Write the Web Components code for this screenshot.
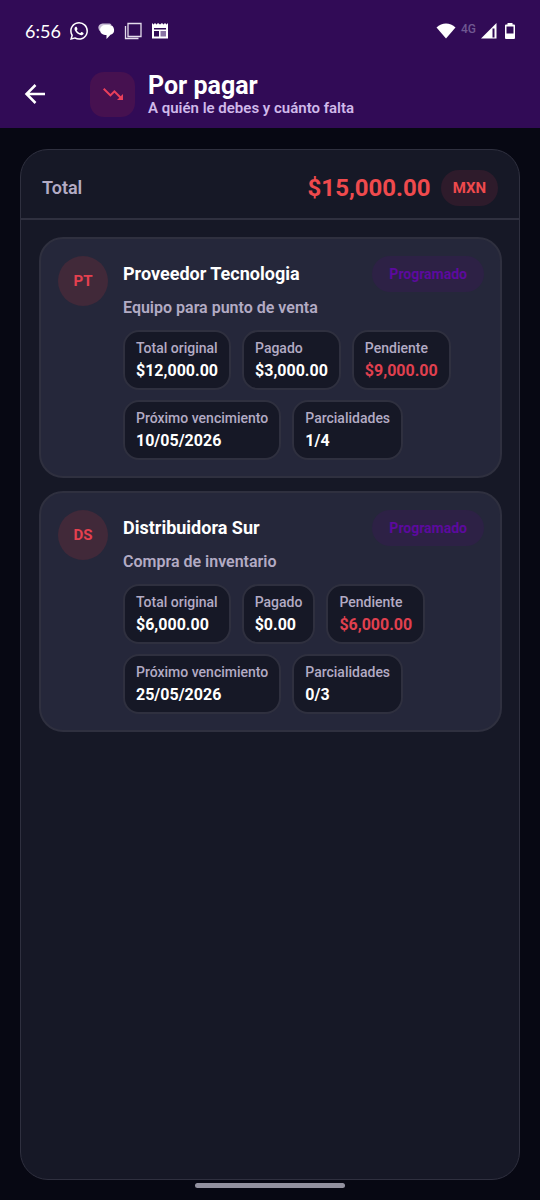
<!DOCTYPE html>
<html lang="es">
<head>
<meta charset="utf-8">
<meta name="viewport" content="width=device-width, initial-scale=1">
<title>Por pagar</title>
<style>
  :root {
    --bar: #310b56;
    --page: #070813;
    --panel: #161826;
    --card: #25273a;
    --line: #2f303f;
    --text: #ffffff;
    --muted: #b3abc4;
    --danger: #ef4a4d;
    --accent: #5c0a9e;
  }
  body {
    margin: 0;
    background: var(--page);
    color: var(--text);
    font-family: Roboto, "Liberation Sans", sans-serif;
  }
</style>
</head>
<body>
<payables-page></payables-page>

<script>
const define = (name, html, setup) => {
  const template = document.createElement('template');
  template.innerHTML = html;
  customElements.define(name, class extends HTMLElement {
    constructor() {
      super();
      this.attachShadow({ mode: 'open' }).append(template.content.cloneNode(true));
    }
    connectedCallback() {
      if (setup) setup(this, this.shadowRoot);
    }
  });
};

define('status-bar', `
  <style>
    :host { display: flex; align-items: center; justify-content: space-between; height: 62px; padding: 0 24px 0 25px; }
    div { display: flex; align-items: center; }
    .left { gap: 9px; }
    .time { font: 400 18px/24px Lato, Roboto, sans-serif; }
    .net { font: 500 12px/14px Roboto, sans-serif; color: #6f5891; align-self: flex-start; margin: 0 4px 0 5px; }
    svg { display: block; }
  </style>
  <div class="left">
    <span class="time">6:56</span>
    <svg width="18" height="18" viewBox="0 0 24 24" fill="#fff"><path d="M17.47 14.38c-.3-.15-1.76-.87-2.03-.97-.27-.1-.47-.15-.67.15-.2.3-.77.97-.94 1.16-.17.2-.35.22-.64.08-.3-.15-1.26-.46-2.39-1.48-.88-.79-1.48-1.76-1.65-2.06-.17-.3-.02-.46.13-.6.13-.14.3-.35.45-.53.15-.17.2-.3.3-.49.1-.2.05-.37-.03-.52-.07-.15-.67-1.61-.91-2.21-.24-.58-.49-.5-.67-.51h-.57c-.2 0-.52.07-.79.37-.27.3-1.04 1.02-1.04 2.48s1.07 2.88 1.22 3.07c.14.2 2.09 3.2 5.07 4.49.71.3 1.26.49 1.69.62.71.23 1.36.2 1.87.12.57-.08 1.76-.72 2-1.41.25-.7.25-1.29.18-1.42-.07-.12-.27-.2-.58-.34M12.05 21.79a9.87 9.87 0 0 1-5.03-1.38l-.36-.21-3.74.98 1-3.65-.24-.37a9.86 9.86 0 0 1-1.51-5.26C2.17 6.44 6.6 2.01 12.05 2.01a9.89 9.89 0 0 1 9.89 9.89c0 5.45-4.43 9.89-9.89 9.89M20.46 3.49A11.82 11.82 0 0 0 12.05 0C5.5 0 .16 5.34.16 11.89c0 2.1.55 4.14 1.59 5.95L.06 24l6.3-1.65a11.88 11.88 0 0 0 5.69 1.45c6.55 0 11.89-5.34 11.89-11.89 0-3.18-1.24-6.17-3.48-8.42"/></svg>
    <svg width="18" height="18" viewBox="0 0 18 18"><path d="M2.500 9C-.5 4 3 1.500 6.500 1.500h5c1.500 0 2.500.5 3 1" fill="#c9bfd6"/><path d="M8 3h4a5 5 0 0 1 1.500 9.800L9.500 17v-4H8A5 5 0 0 1 8 3z" fill="#fff"/></svg>
    <svg width="18" height="18" viewBox="0 0 18 18" fill="none" stroke="#e4dcec" stroke-width="1.300"><path d="M4 1.500h13v13H4zM1.500 4v12.500H14.500"/></svg>
    <svg width="18" height="18" viewBox="0 0 18 18"><path d="M1 1l1.500 1.500L4 1l1.500 1.500L7 1l2 1.500L11 1l1.500 1.500L14 1l1.500 1.500L17 1v15.500H1z" fill="#fff"/><path d="M3 6h12v1.500H3zM3 9h5v5.500H3z" fill="#310b56"/><path d="M9.500 9H15v5.500H9.500z" fill="#8974a3"/></svg>
  </div>
  <div>
    <svg width="20" height="18" viewBox="0 0 20 18"><path d="M.5 5.500C6 0 14 0 19.500 5.500L10 16.500z" fill="#fff"/></svg>
    <span class="net">4G</span>
    <svg width="18" height="18" viewBox="0 0 18 18"><path d="M16.500 1v15.500H1z" fill="#fff"/><path d="M12.500 6.500h2v9h-2z" fill="#310b56"/></svg>
    <svg width="12" height="18" viewBox="0 0 12 18" style="margin-left:6px"><path fill="#fff" fill-rule="evenodd" d="M3.500 1h5v1.500H10a1 1 0 0 1 1 1v12.500a1 1 0 0 1-1 1H2a1 1 0 0 1-1-1V3.500a1 1 0 0 1 1-1h1.500zM2.500 4.500v7h7v-7z"/></svg>
  </div>`);

define('app-bar', `
  <style>
    :host { display: flex; align-items: center; height: 64px; padding: 0 20px 2px; }
    button { display: grid; place-items: center; width: 30px; height: 44px; padding: 0; border: 0; background: none; color: inherit; }
    .mark { display: grid; place-items: center; width: 45px; height: 45px; border-radius: 14px; background: #461150; margin: 0 13px 0 40px; }
    .titles { flex: 1; min-width: 0; }
    h1 { margin: 0; font-size: 25px; line-height: 27px; font-weight: 700; }
    p { margin: 0; font-size: 15px; line-height: 18px; font-weight: 600; color: #d0b9ea; }
  </style>
  <button type="button" aria-label="Volver">
    <svg width="22" height="22" viewBox="0 0 22 22" fill="none" stroke="#fff" stroke-width="2.500"><path d="M21 11H3M11.500 2L2.500 11l9 9"/></svg>
  </button>
  <div class="mark">
    <svg width="24" height="24" viewBox="0 0 24 24" fill="#ea405b"><path d="M16 18l2.290-2.290-4.880-4.880-4 4L2 7.410 3.410 6l6 6 4-4 6.300 6.290L22 12v6z"/></svg>
  </div>
  <div class="titles"><h1><slot name="title"></slot></h1><p><slot name="subtitle"></slot></p></div>`);

define('total-row', `
  <style>
    :host { display: flex; align-items: center; padding: 20px 21px 12px; border-bottom: 2px solid var(--line); }
    .label { flex: 1; font-size: 18px; line-height: 24px; font-weight: 600; color: var(--muted); }
    .sum { font-size: 24px; line-height: 28px; font-weight: 700; color: var(--danger); }
    .pill { margin-left: 10px; padding: 8px 12px; border-radius: 20px; background: #2e1b2b; font-size: 15px; line-height: 20px; font-weight: 700; color: var(--danger); }
  </style>
  <span class="label">Total</span>
  <span class="sum"><slot></slot></span>
  <span class="pill"><slot name="currency"></slot></span>`);

define('stat-chip', `
  <style>
    :host { display: block; box-sizing: border-box; padding: 6px 11px; border: 2px solid var(--line); border-radius: 16px; background: var(--panel); white-space: nowrap; }
    .label { font-size: 14px; line-height: 20px; font-weight: 500; color: var(--muted); }
    .value { margin-top: 2px; font-size: 16px; line-height: 22px; font-weight: 700; }
    :host([tone="danger"]) .value { color: #e0404f; }
  </style>
  <div class="label"></div>
  <div class="value"><slot></slot></div>`,
  (host, root) => { root.querySelector('.label').textContent = host.getAttribute('label'); });

define('debt-card', `
  <style>
    :host { display: flex; align-items: flex-start; gap: 15px; padding: 17px 16px 16px 17px; border: 2px solid var(--line); border-radius: 24px; background: var(--card); }
    .avatar { flex: none; display: grid; place-items: center; width: 50px; height: 50px; border-radius: 50%; background: #412939; color: #e5404f; font-size: 15px; font-weight: 700; }
    .body { flex: 1; min-width: 0; }
    .head { display: flex; align-items: center; }
    h2 { flex: 1; margin: 0; font-size: 18px; line-height: 24px; font-weight: 700; }
    .state { padding: 8px 17px; border-radius: 20px; background: #2d2145; color: var(--accent); font-size: 14px; line-height: 20px; font-weight: 700; }
    p { margin: 5px 0 11px; font-size: 16px; line-height: 22px; font-weight: 600; color: var(--muted); }
    .stats { display: flex; flex-wrap: wrap; gap: 10px 11px; }
  </style>
  <div class="avatar"></div>
  <div class="body">
    <div class="head"><h2><slot name="name"></slot></h2><span class="state"><slot name="state"></slot></span></div>
    <p><slot name="detail"></slot></p>
    <div class="stats"><slot></slot></div>
  </div>`,
  (host, root) => { root.querySelector('.avatar').textContent = host.getAttribute('initials'); });

define('payables-page', `
  <style>
    :host { display: flex; flex-direction: column; min-height: 100vh; }
    header { background: var(--bar); }
    main { flex: 1; display: flex; flex-direction: column; margin: 21px 20px 0; border: 1px solid var(--line); border-radius: 28px; background: var(--panel); }
    .list { display: flex; flex-direction: column; gap: 13px; padding: 17px 17px 18px 18px; }
    footer { display: flex; justify-content: center; height: 17px; padding-top: 3px; }
    .handle { width: 150px; height: 5px; border-radius: 3px; background: #9392a0; }
  </style>
  <header>
    <status-bar></status-bar>
    <app-bar><span slot="title">Por pagar</span><span slot="subtitle">A quién le debes y cuánto falta</span></app-bar>
  </header>
  <main>
    <total-row>$15,000.00<span slot="currency">MXN</span></total-row>
    <div class="list">
      <debt-card initials="PT">
        <span slot="name">Proveedor Tecnologia</span>
        <span slot="state">Programado</span>
        <span slot="detail">Equipo para punto de venta</span>
        <stat-chip label="Total original">$12,000.00</stat-chip>
        <stat-chip label="Pagado">$3,000.00</stat-chip>
        <stat-chip label="Pendiente" tone="danger">$9,000.00</stat-chip>
        <stat-chip label="Próximo vencimiento">10/05/2026</stat-chip>
        <stat-chip label="Parcialidades">1/4</stat-chip>
      </debt-card>
      <debt-card initials="DS">
        <span slot="name">Distribuidora Sur</span>
        <span slot="state">Programado</span>
        <span slot="detail">Compra de inventario</span>
        <stat-chip label="Total original">$6,000.00</stat-chip>
        <stat-chip label="Pagado">$0.00</stat-chip>
        <stat-chip label="Pendiente" tone="danger">$6,000.00</stat-chip>
        <stat-chip label="Próximo vencimiento">25/05/2026</stat-chip>
        <stat-chip label="Parcialidades">0/3</stat-chip>
      </debt-card>
    </div>
  </main>
  <footer><div class="handle"></div></footer>`);
</script>
</body>
</html>
